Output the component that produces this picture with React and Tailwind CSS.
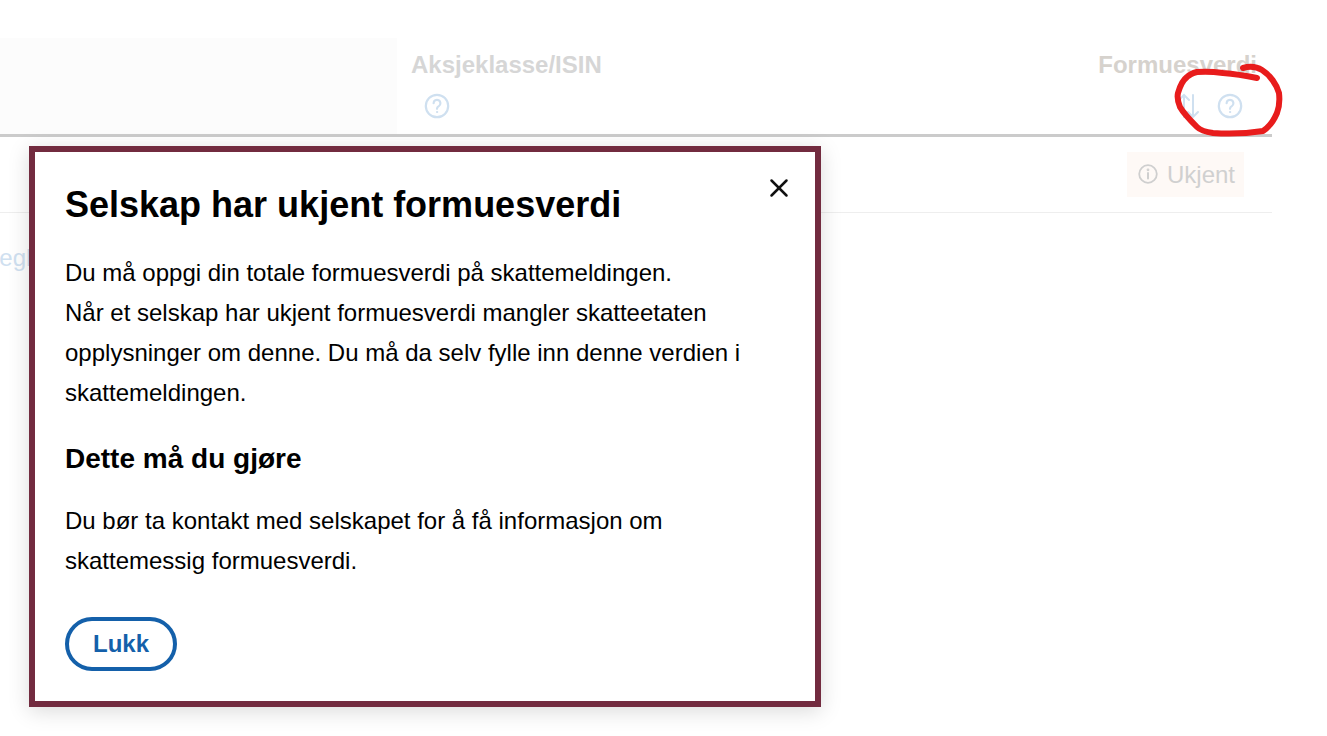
import { X } from 'lucide-react'

function HelpIcon({ className }) {
  return (
    <svg className={className} viewBox="0 0 26 26" fill="none" stroke="#cfe0f0" strokeWidth="2.2" strokeLinecap="round">
      <circle cx="13" cy="13" r="11.2" />
      <path d="M9.6 10.2a3.4 3.4 0 1 1 5.2 2.9c-1.2.7-1.8 1.4-1.8 2.7" />
      <circle cx="13" cy="19" r="0.6" fill="#cfe0f0" strokeWidth="1" />
    </svg>
  )
}

function SortIcon() {
  return (
    <svg className="w-[22px] h-[26px]" viewBox="0 0 22 26" fill="none" stroke="#cfe0f0" strokeWidth="2" strokeLinecap="round">
      <path d="M6 24V2M1 7l5-5 5 5" />
      <path d="M15 2v22M10 19l5 5 5-5" />
    </svg>
  )
}

function InfoIcon() {
  return (
    <svg className="w-[20px] h-[20px]" viewBox="0 0 20 20" fill="none" stroke="#cfcfcf" strokeWidth="1.8" strokeLinecap="round">
      <circle cx="10" cy="10" r="8.8" />
      <path d="M10 9v5.5" strokeWidth="2" />
      <circle cx="10" cy="5.8" r="0.5" fill="#cfcfcf" />
    </svg>
  )
}

export default function App() {
  return (
    <div className="relative h-[736px] overflow-hidden bg-white font-['Liberation_Sans',Arial,sans-serif]">
      {/* tabell i bakgrunnen */}
      <div className="w-[1272px] pt-[38px]">
        <div className="flex h-[99px] border-b-[3px] border-[#cbcbcb]">
          <div className="w-[397px] bg-[#fcfcfc]" />
          <div className="flex-1 pl-[14px] pt-[12px]">
            <div className="text-[24px] leading-[30px] font-bold text-[#d6d6d6]">Aksjeklasse/ISIN</div>
            <HelpIcon className="w-[26px] h-[26px] ml-[13px] mt-[13px]" />
          </div>
          <div className="pr-[15px] pt-[12px] flex flex-col items-end">
            <div className="text-[24px] leading-[30px] font-bold text-[#d6d2cd]">Formuesverdi</div>
            <div className="flex items-center gap-[17px] mt-[13px] mr-[14px]">
              <SortIcon />
              <HelpIcon className="w-[26px] h-[26px]" />
            </div>
          </div>
        </div>
        <div className="flex justify-end items-center h-[76px] pr-[28px] pb-[1px] border-b border-[#eeeeee]">
          <div className="flex items-center gap-[9px] h-[45px] w-[117px] pl-[11px] bg-[#fef9f6]">
            <InfoIcon />
            <span className="text-[24px] leading-[30px] pt-[2px] text-[#d0d0d0]">Ukjent</span>
          </div>
        </div>
        <div className="mt-[30px] -ml-[18px] text-[24px] leading-[30px] text-[#cfe0f0]">Regler</div>
      </div>

      {/* markering tegnet for hånd */}
      <svg className="absolute left-[1170px] top-[60px] w-[120px] h-[80px]" viewBox="1170 60 120 80" fill="none" stroke="#e81c1c" strokeWidth="6" strokeLinecap="round" strokeLinejoin="round">
        <path d="M1243 68C1250 66 1257 67 1262 70C1270 75 1277 85 1279 93C1280 102 1279 108 1277 113C1274 120 1269 127 1263 131C1250 133 1228 134 1213 133C1205 132 1200 130 1197 127C1190 120 1184 114 1180 107C1178 102 1177 97 1178 93C1180 86 1183 80 1187 77C1190 74 1193 73 1197 72C1208 71 1216 72 1223 73C1235 74 1247 76 1257 78" />
      </svg>

      {/* dialog */}
      <div className="absolute left-[29px] top-[146px] w-[792px] h-[561px] bg-white border-[6px] border-[#722b3f] shadow-[0_4px_20px_rgba(0,0,0,0.15)] pl-[30px] pt-[30px]">
        <button className="absolute right-[21px] top-[21px] text-[#111]">
          <X className="w-[30px] h-[30px]" strokeWidth={2} />
        </button>
        <h1 className="text-[36px] leading-[46px] font-bold text-black">Selskap har ukjent formuesverdi</h1>
        <p className="mt-[25px] w-[700px] text-[24px] leading-[40px] text-black">
          Du må oppgi din totale formuesverdi på skattemeldingen.
          <br />
          Når et selskap har ukjent formuesverdi mangler skatteetaten opplysninger om denne. Du må da selv fylle inn denne verdien i skattemeldingen.
        </p>
        <h2 className="mt-[28px] text-[28px] leading-[36px] font-bold text-black">Dette må du gjøre</h2>
        <p className="mt-[24px] w-[700px] text-[24px] leading-[40px] text-black">
          Du bør ta kontakt med selskapet for å få informasjon om skattemessig formuesverdi.
        </p>
        <button className="block mt-[36px] w-[112px] h-[54px] rounded-full border-[4px] border-[#1460aa] text-[24px] font-bold text-[#1460aa]">
          Lukk
        </button>
      </div>
    </div>
  )
}
